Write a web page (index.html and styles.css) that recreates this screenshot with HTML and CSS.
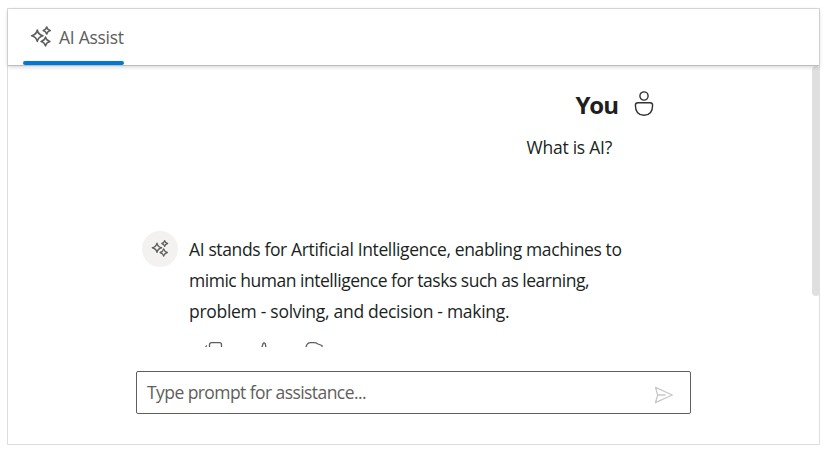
FILE: index.html
```html
<!DOCTYPE html>
<html lang="en">
<head>
<meta charset="utf-8">
<title>AI Assist</title>
<link rel="stylesheet" href="styles.css">
</head>
<body>
<svg class="defs" aria-hidden="true">
  <symbol id="sparkles" viewBox="0 0 22 22">
    <path d="M7.3 5Q8.3 9.7 13 10.7Q8.3 11.7 7.3 16.4Q6.3 11.7 1.6 10.7Q6.3 9.7 7.3 5Z M16.7 2Q17.4 4.8 20.2 5.5Q17.4 6.2 16.7 9Q16 6.2 13.2 5.5Q16 4.8 16.7 2Z M15.5 12.1Q16.4 15.6 19.9 16.5Q16.4 17.4 15.5 20.9Q14.6 17.4 11.1 16.5Q14.6 15.6 15.5 12.1Z"/>
  </symbol>
</svg>
<div class="assist">
  <header class="toolbar">
    <div class="tab">
      <svg class="tab-icon"><use href="#sparkles"/></svg>
      <span class="tab-label">AI Assist</span>
    </div>
  </header>
  <main class="view">
    <div class="conversation">
      <section class="prompt">
        <div class="prompt-head">
          <h2 class="user">You</h2>
          <svg class="user-icon" viewBox="0 0 20 26"><circle cx="10" cy="5" r="4.1"/><path d="M4 11.7H16Q18.6 11.7 18.6 14.3C18.6 20.5 15.5 24.3 10 24.3S1.4 20.5 1.4 14.3Q1.4 11.7 4 11.7Z"/></svg>
        </div>
        <p class="prompt-text">What is AI?</p>
      </section>
      <section class="answer">
        <div class="avatar"><svg class="avatar-icon"><use href="#sparkles"/></svg></div>
        <div class="answer-body">
          <p class="line line-a">AI stands for Artificial Intelligence, enabling machines to</p>
          <p class="line line-b">mimic human intelligence for tasks such as learning,</p>
          <p class="line line-c">problem - solving, and decision - making.</p>
          <div class="actions">
            <svg viewBox="0 0 18 18"><path d="M4.5 13V2.7Q4.5 .7 6.5 .7H14.5Q16.5 .7 16.5 2.7V13Z M2 3.5Q.7 4 .7 6V17H12"/></svg>
            <svg viewBox="0 0 18 18"><path d="M1 9H5C7 7 7.2 4 8 1.7Q9 0 10.2 1.7C11 4 11 5 10.5 7H16L14 16H5"/></svg>
            <svg viewBox="0 0 18 18"><path d="M1 5Q2 .7 5.5 .7H9Q11 .7 13 2L17 3.5V11H12Q11 16 9 17L7 11H1Z"/></svg>
          </div>
        </div>
      </section>
    </div>
    <div class="scroll-thumb"></div>
  </main>
  <footer class="footer">
    <div class="input">
      <span class="placeholder">Type prompt for assistance...</span>
      <svg class="send" viewBox="0 0 20 18"><path d="M1.5 1.3L18.3 9L1.5 16.7L3.7 9ZM3.7 9H11.5"/></svg>
    </div>
  </footer>
</div>
</body>
</html>
```
FILE: styles.css
```css
* { box-sizing: border-box; }
body { margin: 0; background: #fff; color: #201f1e; font: 17.5px/31px "Open Sans", "Noto Sans", sans-serif; }
p, h2 { margin: 0; }
svg { display: block; fill: none; stroke: #605e5c; stroke-width: 1.3; stroke-linejoin: round; }
.defs { width: 0; height: 0; position: absolute; }
.assist { width: 813px; height: 437px; margin: 8px 0 0 7px; border: 1px solid #dedede; display: flex; flex-direction: column; }
.toolbar { height: 57px; flex: none; border-bottom: 1px solid #bdbdbd; box-shadow: 0 1px 4px rgba(0,0,0,.18); padding-left: 15px; display: flex; position: relative; z-index: 1; background: #fff; }
.tab { width: 101px; height: 56px; padding-left: 7px; display: flex; position: relative; color: #605e5c; }
.tab::after { content: ""; position: absolute; left: 0; bottom: 0; width: 101px; height: 4px; border-radius: 2px; background: #0078d4; }
.tab-icon { width: 22px; height: 22px; margin-top: 16px; stroke-width: 1.6; }
.tab-label { margin: 13px 0 0 7px; white-space: nowrap; letter-spacing: -.28px; }
.view { height: 281px; flex: none; overflow: hidden; display: flex; justify-content: space-between; margin-right: -1px; }
.conversation { width: 555px; margin-left: 128px; }
.prompt { height: 165px; padding-top: 22px; }
.prompt-head { display: flex; justify-content: flex-end; padding-right: 37px; height: 44px; }
.user { font-size: 24px; line-height: 34px; font-weight: 700; letter-spacing: -1px; margin-right: 16px; }
.user-icon { width: 20px; height: 26px; margin-top: 3px; stroke: #323130; stroke-width: 1.4; }
.prompt-text { text-align: right; padding-right: 79px; letter-spacing: -.25px; }
.answer { display: flex; padding-left: 6px; }
.avatar { width: 36px; height: 36px; border-radius: 50%; background: #f3f2f1; flex: none; display: grid; place-items: center; }
.avatar-icon { width: 18px; height: 18px; stroke-width: 1.6; transform: translateY(-1px); }
.answer-body { margin-left: 11px; padding-top: 3px; }
.line { white-space: nowrap; }
.line-a { letter-spacing: -.37px; }
.line-b { letter-spacing: -.48px; }
.line-c { letter-spacing: -.29px; }
.actions { display: flex; gap: 32px; padding: 15px 0 0 16px; }
.actions svg { width: 18px; height: 18px; }
.footer { padding: 24px 0 0 128px; }
.input { width: 555px; height: 43px; border: 1px solid #605e5c; border-radius: 2px; display: flex; align-items: center; justify-content: space-between; padding: 0 16px 0 10px; color: #605e5c; }
.placeholder { letter-spacing: -.57px; }
.send { width: 20px; height: 18px; stroke: #c8c8c8; transform: translateY(2px); }
.scroll-thumb { width: 8px; height: 230px; background: #dfdfdf; border-radius: 4px; }
```
